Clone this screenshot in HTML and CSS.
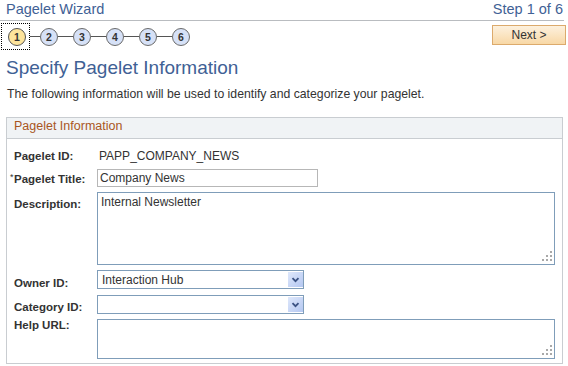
FILE: index.html
```html
<!DOCTYPE html>
<html lang="en">
<head>
    <meta charset="UTF-8">
    <title>Pagelet Wizard</title>
    <link rel="stylesheet" href="styles.css">
</head>
<body>

    <div class="wiz-head">
        <span class="wiz-title">Pagelet Wizard</span>
        <span class="wiz-step">Step 1 of 6</span>
    </div>

    <div class="wiz-nav">
        <div class="steps">
            <span class="step-focus"><span class="step current">1</span></span>
            <span class="link first"></span><span class="step">2</span>
            <span class="link"></span><span class="step">3</span>
            <span class="link"></span><span class="step">4</span>
            <span class="link"></span><span class="step">5</span>
            <span class="link"></span><span class="step">6</span>
        </div>
        <button class="next">Next &gt;</button>
    </div>

    <h1>Specify Pagelet Information</h1>
    <p class="intro">The following information will be used to identify and categorize your pagelet.</p>

    <div class="group">
        <div class="group-head">Pagelet Information</div>
        <div class="form">
            <div class="lbl row-id">Pagelet ID:</div>
            <div class="value row-id">PAPP_COMPANY_NEWS</div>

            <label class="lbl pad-3" for="pagelet-title"><span class="req">*</span>Pagelet Title:</label>
            <input class="text" id="pagelet-title" type="text" value="Company News">

            <label class="lbl pad-5" for="description">Description:</label>
            <div class="area">
                <textarea id="description" class="desc">Internal Newsletter</textarea>
                <svg class="grip" width="10" height="10" viewBox="0 0 10 10"><rect x="8" y="0" width="2" height="2"/><rect x="4" y="4" width="2" height="2"/><rect x="8" y="4" width="2" height="2"/><rect x="0" y="8" width="2" height="2"/><rect x="4" y="8" width="2" height="2"/><rect x="8" y="8" width="2" height="2"/></svg>
            </div>

            <label class="lbl pad-6" for="owner-id">Owner ID:</label>
            <div class="sel">
                <select id="owner-id"><option>Interaction Hub</option></select>
                <span class="sel-btn"><svg width="9" height="6" viewBox="0 0 9 6"><path d="M1.5 1.2 L4.5 4.2 L7.5 1.2" fill="none" stroke="#3b5283" stroke-width="1.8"/></svg></span>
            </div>

            <label class="lbl pad-5" for="category-id">Category ID:</label>
            <div class="sel">
                <select id="category-id"><option></option></select>
                <span class="sel-btn"><svg width="9" height="6" viewBox="0 0 9 6"><path d="M1.5 1.2 L4.5 4.2 L7.5 1.2" fill="none" stroke="#3b5283" stroke-width="1.8"/></svg></span>
            </div>

            <label class="lbl up-2" for="help-url">Help URL:</label>
            <div class="area">
                <textarea id="help-url" class="help"></textarea>
                <svg class="grip" width="10" height="10" viewBox="0 0 10 10"><rect x="8" y="0" width="2" height="2"/><rect x="4" y="4" width="2" height="2"/><rect x="8" y="4" width="2" height="2"/><rect x="0" y="8" width="2" height="2"/><rect x="4" y="8" width="2" height="2"/><rect x="8" y="8" width="2" height="2"/></svg>
            </div>
        </div>
    </div>

</body>
</html>
```

FILE: styles.css
```css
body {
    margin: 0;
    font-family: "Liberation Sans", Arial, sans-serif;
    color: #333;
    background-color: #fff;
}

/* cabeçalho do assistente */
.wiz-head {
    display: flex;
    justify-content: space-between;
    width: 557px;
    height: 20px;
    padding: 0 1px 0 6px;
    border-bottom: 1px solid #b9bcc0;
}
.wiz-title, .wiz-step {
    font-size: 14.5px;
    line-height: 18px;
    color: #3f6195;
}

.wiz-nav {
    display: flex;
    justify-content: space-between;
    align-items: flex-start;
    width: 565px;
    padding: 2px 0 0 1px;
}
.steps {
    display: flex;
    align-items: center;
}
.step-focus {
    display: flex;
    border: 1px dotted #000;
    padding: 4px 3px 3px 6px;
}
.step {
    display: flex;
    align-items: center;
    justify-content: center;
    width: 18px;
    height: 18px;
    box-sizing: border-box;
    border: 1.5px solid #6a6a6a;
    border-radius: 50%;
    background-color: #d6e1f7;
    font-size: 10.5px;
    font-weight: bold;
    color: #333;
}
.step.current {
    background-color: #fde39b;
    border-color: #555;
}
.link {
    width: 15px;
    height: 1px;
    background-color: #555;
}
.link.first {
    width: 10px;
}

.next {
    margin-top: 2px;
    width: 74px;
    height: 20px;
    padding: 0;
    border: 1px solid #dcaa6c;
    background: linear-gradient(#fdf1de, #f8d8a6);
    font-family: "Liberation Sans", Arial, sans-serif;
    font-size: 12px;
    color: #333;
}

h1 {
    margin: 7px 0 0 6px;
    font-size: 19px;
    line-height: 22px;
    font-weight: normal;
    color: #3f6195;
}
.intro {
    margin: 8px 0 0 7px;
    font-size: 12.25px;
    line-height: 14px;
}

/* caixa de grupo */
.group {
    margin: 16px 0 0 6px;
    width: 557px;
    box-sizing: border-box;
    border: 1px solid #c9cdd1;
}
.group-head {
    height: 20px;
    padding-left: 7px;
    background-color: #f0f3f5;
    border-bottom: 1px solid #c9cdd1;
    font-size: 12.5px;
    line-height: 17px;
    color: #a9561e;
}

.form {
    display: grid;
    grid-template-columns: 90px 1fr;
    row-gap: 5px;
    align-items: start;
    padding: 10px 0 4px;
}
.lbl {
    display: block;
    padding-left: 7px;
    font-size: 11.5px;
    font-weight: bold;
    line-height: 14px;
    color: #333;
}
.row-id {
    line-height: 15px;
}
.value {
    padding-left: 2px;
    font-size: 12px;
}
.pad-3 { padding-top: 3px; }
.pad-5 { padding-top: 5px; }
.pad-6 { padding-top: 6px; }
.up-2 { margin-top: -1px; }

.req {
    display: inline-block;
    width: 4px;
    margin-left: -4px;
    font-size: 9px;
    font-weight: normal;
    vertical-align: top;
    line-height: 10px;
}

.text {
    display: block;
    width: 221px;
    height: 18px;
    box-sizing: border-box;
    margin: 0;
    padding: 0 2px;
    border: 1px solid #b7b7b7;
    font-family: "Liberation Sans", Arial, sans-serif;
    font-size: 12px;
    color: #333;
    outline: none;
}

.area {
    position: relative;
    width: 458px;
}
.area textarea {
    display: block;
    width: 100%;
    box-sizing: border-box;
    margin: 0;
    padding: 2px 3px;
    border: 1px solid #7f9db9;
    resize: none;
    font-family: "Liberation Sans", Arial, sans-serif;
    font-size: 12px;
    line-height: 14px;
    color: #333;
    outline: none;
}
.desc { height: 73px; }
.help { height: 40px; }
.grip {
    position: absolute;
    right: 3px;
    bottom: 4px;
    fill: #a9a9a9;
}

.sel {
    position: relative;
    width: 207px;
}
.sel select {
    display: block;
    width: 100%;
    height: 19px;
    box-sizing: border-box;
    margin: 0;
    padding: 0 20px 0 4px;
    border: 1px solid #7f9db9;
    border-radius: 0;
    background-color: #fff;
    appearance: none;
    font-family: "Liberation Sans", Arial, sans-serif;
    font-size: 12px;
    color: #333;
    outline: none;
}
.sel-btn {
    position: absolute;
    top: 2px;
    right: 1px;
    display: flex;
    align-items: center;
    justify-content: center;
    width: 15px;
    height: 15px;
    background: linear-gradient(135deg, #dfe8fb, #b4c7f1);
}
```
